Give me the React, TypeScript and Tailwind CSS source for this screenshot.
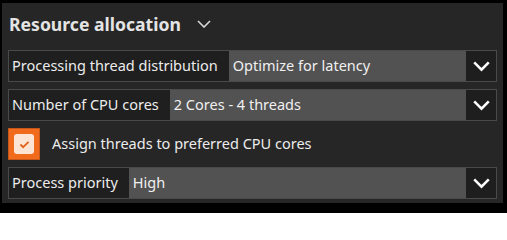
import { ReactNode } from 'react';

const font = { fontFamily: '"Segoe UI", "Noto Sans", "Open Sans", sans-serif' };

function Chevron({ className }: { className?: string }) {
  return (
    <svg viewBox="0 0 16 10" className={className} fill="none" stroke="currentColor" strokeWidth={2.4} strokeLinecap="square">
      <path d="M2 2 L8 8 L14 2" />
    </svg>
  );
}

function SelectRow({ label, value }: { label: string; value: ReactNode }) {
  return (
    <div className="flex h-[32px] border border-[#4a4a4a]">
      <div className="flex items-center bg-[#1f1f1f] pl-[3px] pr-[11px] text-[14.5px] text-[#ececec] whitespace-nowrap">
        {label}
      </div>
      <div className="flex flex-1 items-center bg-[#525252] pl-[4px] text-[14.5px] text-[#f0f0f0] whitespace-nowrap">
        {value}
      </div>
      <div className="flex w-[30px] items-center justify-center bg-[#1e1e1e] text-white">
        <Chevron className="w-[17px] h-[11px]" />
      </div>
    </div>
  );
}

export default function App() {
  return (
    <div className="w-[507px] h-[213px] bg-black pt-[3px] pl-[2px]" style={font}>
      <div className="w-[501px] h-[200px] bg-[#262626] px-[6px] pb-[4px]">
        <div className="flex h-[47px] items-center gap-[16px] pl-[1px] pb-[5px]">
          <span className="text-[17.6px] font-bold text-[#e4e4e4]">Resource allocation</span>
          <svg viewBox="0 0 14 8" className="w-[14px] h-[8px] text-[#d8d8d8]" fill="none" stroke="currentColor" strokeWidth={1.6}>
            <path d="M1 1 L7 7 L13 1" />
          </svg>
        </div>
        <div className="flex flex-col gap-[7px]">
          <SelectRow label="Processing thread distribution" value="Optimize for latency" />
          <SelectRow label="Number of CPU cores" value="2 Cores - 4 threads" />
          <div className="flex h-[32px] items-center gap-[12px]">
            <div className="flex h-[32px] w-[32px] items-center justify-center bg-[#f26a1b] border border-[#c4561a]">
              <div className="flex h-[20px] w-[20px] items-center justify-center rounded-[3px] bg-[#fde5d6]">
                <svg viewBox="0 0 12 10" className="w-[11px] h-[9px]" fill="none" stroke="#e2621c" strokeWidth={2}>
                  <path d="M1.5 5 L4.5 8 L10.5 2" />
                </svg>
              </div>
            </div>
            <span className="text-[14.5px] text-[#ececec]">Assign threads to preferred CPU cores</span>
          </div>
          <SelectRow label="Process priority" value="High" />
        </div>
      </div>
    </div>
  );
}
